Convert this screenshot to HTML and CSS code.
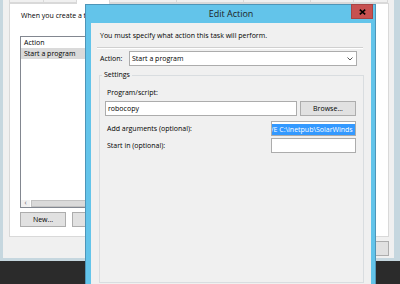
FILE: index.html
```html
<!DOCTYPE html>
<html lang="en">
<head>
  <meta charset="UTF-8" />
  <meta name="viewport" content="width=device-width, initial-scale=1.0" />
  <title>Edit Action</title>
  <link rel="stylesheet" href="styles.css">
</head>
<body>
  <div class="desktop">

    <!-- task properties, behind the dialog -->
    <div class="window props">
      <div class="tabs">
        <div class="tab"></div>
        <div class="tab"></div>
        <div class="tab active"></div>
        <div class="tab wide"></div>
        <div class="tab wide"></div>
        <div class="tab wide"></div>
        <div class="tab mid"></div>
        <div class="tab"></div>
      </div>
      <div class="tab-page">
        <p class="hint">When you create a task, you must specify the action</p>
        <div class="listview">
          <div class="lv-header">Action</div>
          <div class="lv-row selected">Start a program</div>
          <div class="lv-fill"></div>
          <div class="hscroll">
            <span class="arrow">&lsaquo;</span>
            <span class="thumb"></span>
          </div>
        </div>
        <div class="button-row">
          <button class="btn">New...</button>
          <button class="btn">Edit...</button>
          <button class="btn">Delete</button>
        </div>
      </div>
      <div class="dialog-buttons">
        <button class="btn wide-btn">OK</button>
        <button class="btn wide-btn">Cancel</button>
      </div>
    </div>

    <!-- Edit Action dialog -->
    <div class="window edit">
      <div class="titlebar">
        <span></span>
        <span class="title">Edit Action</span>
        <button class="close" aria-label="Close">
          <svg width="7" height="6" viewBox="0 0 7 6">
            <path d="M0.8 0.6 L6.2 5.4 M6.2 0.6 L0.8 5.4" stroke="#000" stroke-width="1.6" fill="none" />
          </svg>
        </button>
      </div>
      <div class="dlg-body">
        <p class="intro">You must specify what action this task will perform.</p>
        <div class="sep"></div>
        <div class="action-row">
          <label class="action-label">Action:</label>
          <div class="combo">
            <span>Start a program</span>
            <svg width="6" height="4" viewBox="0 0 6 4">
              <path d="M0.5 0.5 L3 3 L5.5 0.5" stroke="#555" stroke-width="1" fill="none" />
            </svg>
          </div>
        </div>
        <fieldset class="group">
          <legend>Settings</legend>
          <label class="lbl">Program/script:</label>
          <div class="prog-row">
            <div class="textbox prog">robocopy</div>
            <button class="btn browse">Browse...</button>
          </div>
          <div class="opt-row first">
            <label class="lbl">Add arguments (optional):</label>
            <div class="textbox short"><span class="sel">/E C:\inetpub\SolarWinds D:\</span></div>
          </div>
          <div class="opt-row">
            <label class="lbl">Start in (optional):</label>
            <div class="textbox short"></div>
          </div>
        </fieldset>
      </div>
    </div>

  </div>
</body>
</html>
```

FILE: styles.css
```css
* {
  box-sizing: border-box;
}
body {
  margin: 0;
  width: 400px;
  height: 284px;
  overflow: hidden;
  background: #2b2b2b;
  font-family: 'Open Sans', sans-serif;
  font-size: 7px;
  line-height: 10px;
  color: #000;
}
p {
  margin: 0;
}
.desktop {
  position: relative;
  width: 400px;
  height: 284px;
  overflow: hidden;
}
.window {
  position: absolute;
}

/* buttons shared by both windows */
.btn {
  font: inherit;
  color: #000;
  background: #e1e1e1;
  border: 1px solid #adadad;
  height: 15px;
  width: 46px;
  padding: 0;
  line-height: 13px;
}

/* the properties window behind */
.props {
  left: -3px;
  top: -17px;
  width: 403px;
  height: 278px;
  background: #f0f0f0;
  border: 6px solid #c6d7df;
  border-top: 0;
  border-bottom-width: 3px;
  display: flex;
  flex-direction: column;
}
.tabs {
  display: flex;
  height: 20px;
  margin-left: 6px;
}
.tab {
  width: 34px;
  border: 1px solid #d9d9d9;
  border-right: 0;
  background: #f0f0f0;
}
.tab:nth-child(n+2) {
  width: 33px;
}
.tab.wide {
  width: 67px;
}
.tab.mid {
  width: 43px;
}
.tab:last-child {
  width: 35px;
  border-right: 1px solid #d9d9d9;
}
.tab.active {
  background: #fff;
  margin-bottom: -1px;
  border-bottom: 0;
  position: relative;
}
.tab-page {
  margin-left: 6px;
  width: 380px;
  height: 234px;
  background: #fff;
  border: 1px solid #d9d9d9;
  padding: 7px 0 0 10px;
}
.hint {
  padding-left: 1px;
  white-space: nowrap;
}
.listview {
  margin-top: 15px;
  width: 345px;
  height: 172px;
  border: 1px solid #828790;
  display: flex;
  flex-direction: column;
}
.lv-header {
  height: 11px;
  line-height: 11px;
  padding-left: 3px;
}
.lv-row {
  height: 11px;
  line-height: 11px;
  padding-left: 3px;
}
.lv-row.selected {
  background: #dadada;
}
.lv-fill {
  flex: 1;
}
.hscroll {
  display: flex;
  height: 7px;
}
.arrow {
  width: 9px;
  line-height: 6px;
  text-align: center;
  color: #606060;
  background: #f0f0f0;
}
.thumb {
  flex: 1;
  margin-left: 1px;
  background: #dadada;
  border: 1px solid #c2c2c2;
}
.button-row {
  display: flex;
  gap: 6px;
  margin-top: 4px;
}
.dialog-buttons {
  display: flex;
  justify-content: flex-end;
  gap: 6px;
  margin-top: 4px;
  padding-right: 5px;
}
.wide-btn {
  width: 50px;
}

/* Edit Action dialog */
.edit {
  left: 85px;
  top: 4px;
  width: 291px;
  height: 300px;
  background: #63c4ea;
  border: 1px solid #4e95b8;
  padding: 0 4px 4px 5px;
  display: flex;
  flex-direction: column;
}
.titlebar {
  height: 18px;
  display: grid;
  grid-template-columns: 1fr auto 1fr;
  align-items: center;
}
.title {
  font-size: 9px;
  color: #1e1e1e;
}
.close {
  justify-self: end;
  align-self: start;
  width: 22px;
  height: 15px;
  margin: -1px -2px 0 0;
  padding: 0;
  background: #c75050;
  border: 1px solid #a84343;
  display: flex;
  align-items: center;
  justify-content: center;
}
.dlg-body {
  flex: 1;
  background: #f0f0f0;
  padding: 8px 8px 0 9px;
}
.sep {
  margin: 6px 0 0 -3px;
  height: 2px;
  border-top: 1px solid #d0d0d0;
  border-bottom: 1px solid #fff;
}
.action-row {
  display: flex;
  align-items: center;
  margin-top: 2px;
}
.action-label {
  width: 29px;
}
.combo {
  width: 228px;
  height: 15px;
  background: #fff;
  border: 1px solid #acacac;
  display: flex;
  align-items: center;
  justify-content: space-between;
  padding: 0 3px 0 2px;
}
.group {
  margin: 4px -1px 0 -1px;
  height: 213px;
  border: 1px solid #d9dde0;
  padding: 8px 7px 0 5px;
  min-width: 0;
}
.group legend {
  margin-left: -3px;
  padding: 0 2px;
}
.lbl {
  display: block;
  padding-left: 2px;
}
.prog-row {
  display: flex;
  gap: 3px;
  margin-top: 3px;
}
.textbox {
  height: 15px;
  background: #fff;
  border: 1px solid #acacac;
  padding-left: 2px;
  line-height: 13px;
  white-space: nowrap;
  overflow: hidden;
}
.textbox.prog {
  width: 192px;
}
.browse {
  width: 56px;
}
.opt-row {
  display: flex;
  justify-content: space-between;
  align-items: center;
  margin-top: 2px;
}
.opt-row.first {
  margin-top: 5px;
}
.textbox.short {
  width: 85px;
  padding: 1px 0 0 0;
}
.sel {
  display: inline-block;
  margin-left: -1px;
  background: #3399ff;
  color: #fff;
  line-height: 11px;
}
```
